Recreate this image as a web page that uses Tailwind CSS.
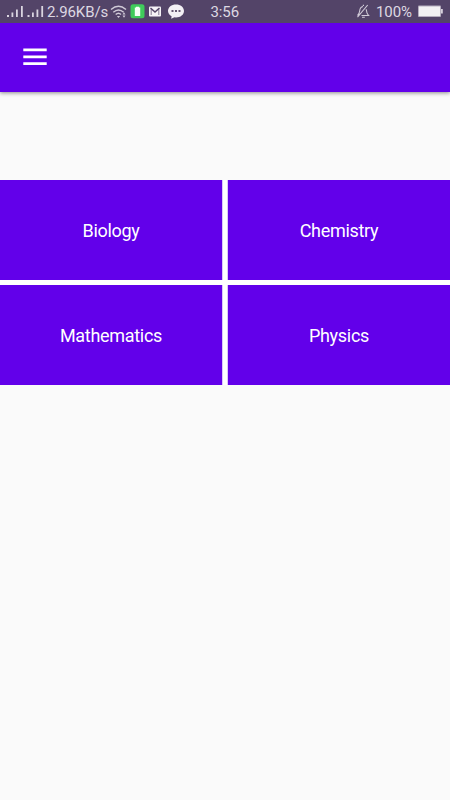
<!DOCTYPE html>
<html lang="en">
<head>
<meta charset="utf-8">
<meta name="viewport" content="width=device-width, initial-scale=1">
<title>Subjects</title>
<script src="https://cdn.jsdelivr.net/npm/@tailwindcss/browser@4"></script>
</head>
<body class="flex h-[800px] w-[450px] flex-col overflow-hidden bg-[#fafafa] font-[Roboto,sans-serif]">
  <div class="z-20 flex h-[23px] shrink-0 items-center bg-[#534468] text-[15px] leading-[23px] tracking-[-0.1px] text-[#ddd8e2]">
    <svg class="ml-[6px] h-[23px] w-[38px] shrink-0" viewBox="0 0 38 23" fill="#d9d4df" aria-label="Signal">
      <path d="M1 15h2v2H1zM5.500 12.500h1.800V17H5.500zM10 9.500h1.800V17H10zM15 6h1.800v11H15zM21.500 15h2v2h-2zM26 12.500h1.800V17H26zM30.500 9.500h1.800V17h-1.800zM35.300 6h1.800v11h-1.800z"/>
    </svg>
    <span class="ml-[3px] w-[63px] whitespace-nowrap pt-px">2.96KB/s</span>
    <svg class="h-[23px] w-[18px] shrink-0" viewBox="110 0 18 23" fill="none" stroke="#d0cad7" stroke-width="1.400" aria-label="Wi-Fi">
      <path d="M111 9.500Q118.500 3.100 126 9.500M113.300 12.200Q118.500 7.600 123.700 12.200M115.700 14.600Q118.500 12 121 14.600"/>
      <path d="M116.900 16h3.200l-1.600 2zM124 12.200l1.500 2.200h-3zM124 17.800l1.500-2.200h-3z" fill="#d0cad7" stroke="none"/>
    </svg>
    <svg class="h-[23px] w-[58px] shrink-0" viewBox="128 0 58 23" aria-label="Notifications">
      <rect x="130.500" y="4.300" width="14" height="14" rx="2.500" fill="#3fcb5b"/>
      <path d="M134.800 7.500h1.200v-.7h3v.7h1.200v8.500h-5.400z" fill="#f3fff5"/>
      <rect x="149" y="6.500" width="12" height="10" rx="1" fill="#f5f2f7"/>
      <path d="M150.500 8l4.500 4 4.500-4" fill="none" stroke="#534468" stroke-width="1.500"/>
      <path d="M151.200 9v6M158.800 9v6" stroke="#534468" stroke-width=".7"/>
      <path d="M176 4.500c4.500 0 8 2.700 8 6.500s-3.500 6.400-8 6.400l-1.500-.1-3.300 1.400.4-2.400c-2.200-1.200-3.600-3.100-3.600-5.300 0-3.800 3.500-6.500 8-6.500z" fill="#f3f0f5"/>
      <path d="M171.500 10h2v2h-2zM175 10h2v2h-2zM178.500 10h2v2h-2z" fill="#665873"/>
    </svg>
    <span class="ml-[24.500px] w-[32px] whitespace-nowrap pt-px">3:56</span>
    <svg class="ml-auto h-[23px] w-[14px] shrink-0" viewBox="356 0 14 23" fill="none" stroke="#d0cad7" stroke-width="1.100" aria-label="Muted">
      <path d="M357.500 15.500c1.700-1.400 2-2.600 2.200-4.700.2-2.400 1.100-3.900 3.300-4.300M366.200 9.300c.3 2.900.8 4.800 2.300 6.200h-7M357.500 17.200L367.700 5M362 17.300h2.800M362.800 5.400h1.200"/>
    </svg>
    <span class="ml-[6px] w-[36px] whitespace-nowrap pt-px">100%</span>
    <svg class="ml-[5px] mr-[6px] h-[23px] w-[27px] shrink-0" viewBox="417 0 27 23" aria-label="Battery">
      <rect x="418" y="5.500" width="23" height="11.500" rx="1" fill="#b5adbe"/>
      <rect x="419" y="6.500" width="21" height="9.500" fill="#f2f0f3"/>
      <path d="M441 9h1.800v4.500H441z" fill="#d6d0dc"/>
    </svg>
  </div>
  <header class="z-10 flex h-[69px] shrink-0 items-center bg-[#6200ea] pb-px shadow-[0_1px_4px_rgba(0,0,0,0.45)]">
    <svg class="ml-[23px] h-[24px] w-[24px]" viewBox="0 0 24 24" fill="#fff" role="img" aria-label="Menu">
      <path d="M.3 3.400h23.400v2.900H.3zM.3 10.400h23.400v2.900H.3zM.3 17.200h23.400v2.900H.3z"/>
    </svg>
  </header>
  <main class="mt-[88px] grid grid-cols-[222px_222px] gap-x-[6px] gap-y-[5px] bg-white text-[18px] tracking-[-0.300px] text-white">
    <div class="flex h-[100px] items-center justify-center bg-[#6200ea] pt-px shadow-[1px_0_0_#dcc6fa]">Biology</div>
    <div class="flex h-[100px] items-center justify-center bg-[#6200ea] pt-px shadow-[-1px_0_0_#dcc6fa]">Chemistry</div>
    <div class="flex h-[100px] items-center justify-center bg-[#6200ea] pt-px shadow-[1px_0_0_#dcc6fa]">Mathematics</div>
    <div class="flex h-[100px] items-center justify-center bg-[#6200ea] pt-px shadow-[-1px_0_0_#dcc6fa]">Physics</div>
  </main>
</body>
</html>
